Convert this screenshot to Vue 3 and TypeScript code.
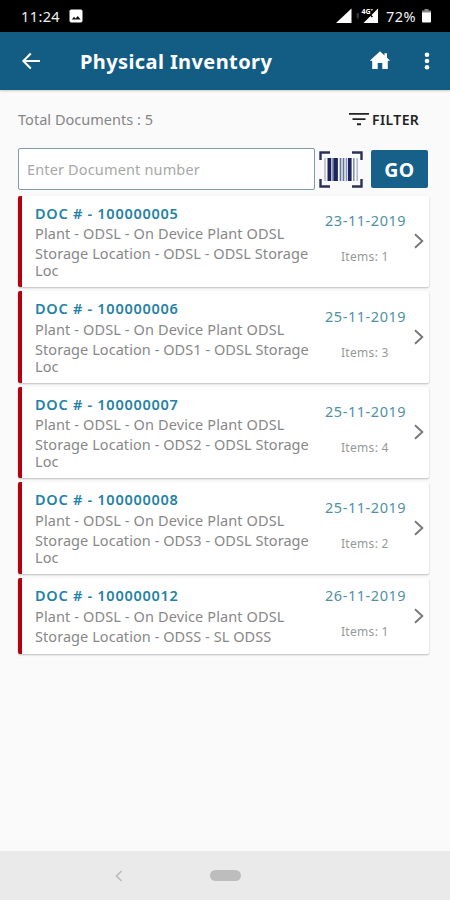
<script setup lang="ts">
interface InventoryDoc {
  id: string
  storage: string[]
  date: string
  items: number
}

const docs: InventoryDoc[] = [
  { id: '100000005', storage: ['ODSL - ODSL Storage', 'Loc'], date: '23-11-2019', items: 1 },
  { id: '100000006', storage: ['ODS1 - ODSL Storage', 'Loc'], date: '25-11-2019', items: 3 },
  { id: '100000007', storage: ['ODS2 - ODSL Storage', 'Loc'], date: '25-11-2019', items: 4 },
  { id: '100000008', storage: ['ODS3 - ODSL Storage', 'Loc'], date: '25-11-2019', items: 2 },
  { id: '100000012', storage: ['ODSS - SL ODSS'], date: '26-11-2019', items: 1 },
]
</script>

<template>
  <div class="screen">
    <div class="status">
      <span class="time">11:24</span>
      <svg class="photo" width="14" height="14" viewBox="0 0 14 14">
        <rect x="0.5" y="0.5" width="13" height="13" rx="1.8" fill="#fff" />
        <path d="M2.8 10.5 5 7.8l1.6 1.6L8.8 7l2.8 3.5z" fill="#111" />
      </svg>
      <svg class="signals" width="44" height="16" viewBox="0 0 44 16">
        <path d="M0 15 15.5 0.5V15z" fill="#fff" />
        <rect x="20.5" y="5" width="2.5" height="5.5" rx="1" fill="#333" />
        <path d="M27.5 15 42 0.5V15z" fill="#fff" />
        <path d="M31 4 36.5 9" stroke="#000" stroke-width="1.5" />
        <text x="25.5" y="6" class="net">4G⁺</text>
      </svg>
      <span class="percent">72%</span>
      <svg class="battery" width="9" height="14" viewBox="0 0 9 14">
        <path d="M2.5 0h4v1.500H9V4H0V1.500h2.500z" fill="#888" />
        <path d="M0 3.500h9V12.500q0 1-1 1H1q-1 0-1-1z" fill="#fff" />
      </svg>
    </div>

    <header class="bar">
      <svg class="back" width="20" height="18" viewBox="0 0 20 18">
        <path d="M9.800 1.600 2.400 9l7.400 7.400M2.400 9h16.600" fill="none" stroke="#fff" stroke-width="2.100" />
      </svg>
      <h1 class="title">Physical Inventory</h1>
      <svg class="home" width="22" height="19" viewBox="0 0 22 19">
        <path d="M11 0.300 15.500 4.500V2.200H18V6.800L21.200 9.800H18.800V18H13.300V12H8.700V18H3.200V9.800H0.800z" fill="#fff" />
      </svg>
      <svg class="more" width="6" height="18" viewBox="0 0 6 18">
        <circle cx="3" cy="2.700" r="2.300" fill="#fff" />
        <circle cx="3" cy="9" r="2.300" fill="#fff" />
        <circle cx="3" cy="15.300" r="2.300" fill="#fff" />
      </svg>
    </header>

    <main class="content">
      <div class="summary">
        <span class="total">Total Documents : 5</span>
        <div class="filter">
          <svg width="20" height="14" viewBox="0 0 20 14">
            <path d="M0 1.900h20M3.500 7.100h13M8 12.200h4" stroke="#222" stroke-width="1.900" />
          </svg>
          <span class="filter-label">FILTER</span>
        </div>
      </div>

      <div class="search">
        <div class="field"><span class="placeholder">Enter Document number</span></div>
        <svg class="barcode" width="44" height="37" viewBox="0 0 44 37">
          <path d="M1.500 9V1.500H11M33 1.500H42.500V9M42.500 28V35.500H33M11 35.500H1.500V28" fill="none" stroke="#2c3057" stroke-width="2.400" />
          <path d="M6 7V30M38.200 7V30" stroke="#a8afc8" stroke-width="1.300" />
          <path d="M10.300 7V30M30.800 7V30" stroke="#1c2460" stroke-width="3.600" />
          <path d="M16.600 7V30" stroke="#1c2460" stroke-width="4.600" />
          <path d="M13.300 7V30M34.800 7V30M27.500 7V30" stroke="#8793b4" stroke-width="1.600" />
          <path d="M21.500 7V30M24.500 7V30" stroke="#65759c" stroke-width="1.700" />
        </svg>
        <button class="go">GO</button>
      </div>

      <div class="list">
        <article v-for="doc in docs" :key="doc.id" class="card">
          <div class="details">
            <div class="doc">DOC # - {{ doc.id }}</div>
            <div class="line plant">Plant - ODSL - On Device Plant ODSL</div>
            <div class="line">Storage Location - {{ doc.storage[0] }}</div>
            <div v-if="doc.storage[1]" class="line tail">{{ doc.storage[1] }}</div>
          </div>
          <div class="meta">
            <div class="date">{{ doc.date }}</div>
            <div class="items">Items: {{ doc.items }}</div>
          </div>
          <svg class="chevron" width="10" height="16" viewBox="0 0 10 16">
            <path d="M1 1.200 8.300 8 1 14.800" fill="none" stroke="#777" stroke-width="1.900" />
          </svg>
        </article>
      </div>
    </main>

    <footer class="nav">
      <svg class="nav-back" width="8" height="12" viewBox="0 0 8 12">
        <path d="M6.500 1 1.500 6l5 5" fill="none" stroke="#bcbcbc" stroke-width="1.700" />
      </svg>
      <span class="pill"></span>
    </footer>
  </div>
</template>

<style>
body {
  margin: 0;
}
</style>

<style scoped>
.screen {
  display: flex;
  flex-direction: column;
  width: 450px;
  height: 900px;
  overflow: hidden;
  background: #fafafa;
  font-family: 'Noto Sans', sans-serif;
  white-space: nowrap;
}
.screen svg {
  display: block;
  flex: none;
}
.status {
  display: flex;
  align-items: center;
  height: 32px;
  background: #000;
  color: #f2f2f2;
  font-size: 14.5px;
}
.time {
  width: 48px;
  margin-left: 21px;
  letter-spacing: 0.4px;
}
.signals {
  margin-left: 253px;
}
.net {
  font-size: 7px;
  font-weight: 700;
  fill: #fff;
}
.percent {
  width: 30px;
  margin-left: 6px;
  letter-spacing: 0.4px;
}
.battery {
  margin-left: 6px;
}
.bar {
  display: flex;
  align-items: center;
  height: 58px;
  background: #135d84;
  box-shadow: 0 1px 2px rgba(0, 0, 0, 0.2);
}
.back {
  margin-left: 21px;
}
.title {
  width: 289px;
  margin: 2px 0 0 39px;
  color: #fff;
  font-size: 20px;
  font-weight: 700;
  line-height: 28px;
  letter-spacing: 0.4px;
}
.home {
  margin-top: -1px;
}
.more {
  margin-left: 33px;
}
.content {
  flex: 1;
  padding: 0 21px 0 18px;
}
.summary {
  display: flex;
  align-items: center;
  justify-content: space-between;
  height: 58px;
  padding-right: 9px;
}
.total {
  color: #868686;
  font-size: 14.5px;
  letter-spacing: 0.03px;
}
.filter {
  display: flex;
  align-items: center;
  gap: 3px;
}
.filter-label {
  width: 48px;
  color: #222;
  font-size: 14px;
  font-weight: 600;
  letter-spacing: 0.4px;
}
.search {
  display: flex;
  align-items: center;
  height: 42px;
}
.field {
  display: flex;
  align-items: center;
  box-sizing: border-box;
  width: 297px;
  height: 42px;
  padding-left: 8px;
  border: 1.5px solid #7f9cab;
  border-radius: 2px;
  background: #fff;
}
.placeholder {
  color: #a8a8a8;
  font-size: 14.5px;
  letter-spacing: 0.15px;
}
.barcode {
  margin-left: 4px;
}
.go {
  width: 57px;
  height: 38px;
  margin-left: 8px;
  padding: 0;
  border: 0;
  border-radius: 2px;
  background: #16608a;
  color: #fff;
  font-family: inherit;
  font-size: 19.5px;
  font-weight: 700;
  letter-spacing: 0.6px;
}
.list {
  display: flex;
  flex-direction: column;
  gap: 4px;
  padding-top: 5.5px;
}
.card {
  display: flex;
  align-items: center;
  box-sizing: border-box;
  padding: 7px 3px 7.5px 13px;
  border-left: 4px solid #b4000e;
  border-radius: 2px;
  background: #fff;
  box-shadow: 0 1px 2px rgba(0, 0, 0, 0.25);
}
.details {
  width: 288px;
}
.doc,
.line {
  height: 20px;
  font-size: 14.5px;
  line-height: 20px;
}
.doc {
  height: 20.5px;
  color: #2482a6;
  font-weight: 600;
  letter-spacing: 0.72px;
}
.line {
  color: #888;
  letter-spacing: 0.06px;
}
.line.plant {
  letter-spacing: 0.12px;
}
.line.tail {
  height: 16.5px;
  line-height: 14px;
}
.meta {
  box-sizing: border-box;
  width: 84px;
  padding: 0 0 7px 2px;
}
.date {
  color: #4e929f;
  font-size: 14.5px;
  line-height: 20px;
  letter-spacing: 0.55px;
}
.items {
  margin-top: 18px;
  padding-left: 16px;
  color: #989898;
  font-size: 12px;
  line-height: 17px;
  letter-spacing: 0.3px;
}
.chevron {
  margin-left: 7px;
}
.nav {
  display: flex;
  align-items: center;
  height: 49px;
  background: #eaeaea;
}
.nav-back {
  margin-left: 115px;
}
.pill {
  width: 31px;
  height: 11px;
  margin-left: 87px;
  border-radius: 6px;
  background: #bdbdbd;
}
</style>
